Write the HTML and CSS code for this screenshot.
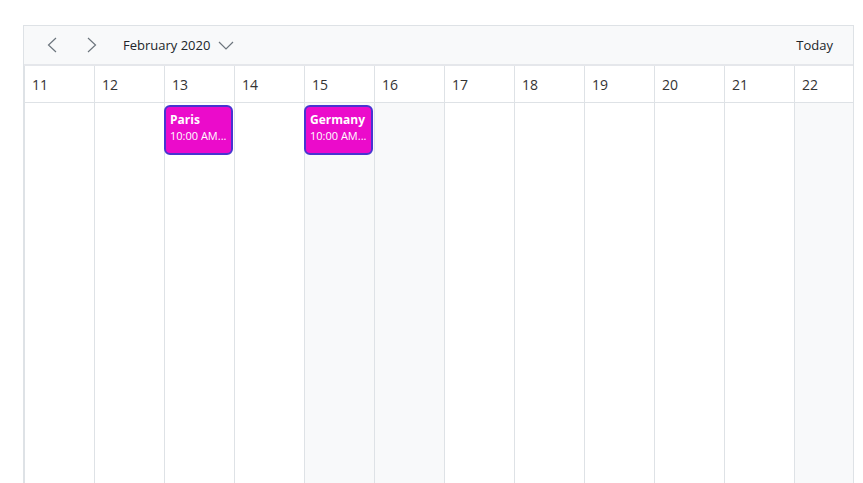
FILE: index.html
```html
<!DOCTYPE html>
<html lang="en">
<head>
    <meta charset="UTF-8">
    <meta name="viewport" content="width=device-width, initial-scale=1.0">
    <title>Timeline Month - Scheduler</title>
    <link rel="stylesheet" href="styles.css">
</head>
<body>
    <div class="scheduler">
        <div class="toolbar">
            <button class="nav-btn" aria-label="Previous">
                <svg width="10" height="16" viewBox="0 0 10 16"><path d="M9 1 L1.5 8 L9 15" fill="none" stroke="#6c757d" stroke-width="1.2"/></svg>
            </button>
            <button class="nav-btn" aria-label="Next">
                <svg width="10" height="16" viewBox="0 0 10 16"><path d="M1 1 L8.5 8 L1 15" fill="none" stroke="#6c757d" stroke-width="1.2"/></svg>
            </button>
            <button class="date-range">
                February 2020
                <svg width="16" height="10" viewBox="0 0 16 10"><path d="M1 1 L8 8 L15 1" fill="none" stroke="#6c757d" stroke-width="1.2"/></svg>
            </button>
            <button class="today-btn">Today</button>
        </div>
        <div class="dates">
            <div class="date">11</div>
            <div class="date">12</div>
            <div class="date">13</div>
            <div class="date">14</div>
            <div class="date">15</div>
            <div class="date">16</div>
            <div class="date">17</div>
            <div class="date">18</div>
            <div class="date">19</div>
            <div class="date">20</div>
            <div class="date">21</div>
            <div class="date">22</div>
        </div>
        <div class="cells">
            <div class="cell"></div>
            <div class="cell"></div>
            <div class="cell">
                <div class="appointment">
                    <div class="subject">Paris</div>
                    <div class="time">10:00 AM...</div>
                </div>
            </div>
            <div class="cell"></div>
            <div class="cell weekend">
                <div class="appointment">
                    <div class="subject">Germany</div>
                    <div class="time">10:00 AM...</div>
                </div>
            </div>
            <div class="cell weekend"></div>
            <div class="cell"></div>
            <div class="cell"></div>
            <div class="cell"></div>
            <div class="cell"></div>
            <div class="cell"></div>
            <div class="cell weekend"></div>
        </div>
    </div>
</body>
</html>
```

FILE: styles.css
```css
* {
    box-sizing: border-box;
    margin: 0;
    padding: 0;
}

body {
    font-family: 'Open Sans', 'Noto Sans', Arial, sans-serif;
    color: #212529;
    background: #fff;
    overflow: hidden;
}

.scheduler {
    margin: 25px 0 0 23px;
    width: 831px;
    height: calc(100vh - 25px);
    border: 1px solid #dee2e6;
    border-bottom: none;
    overflow: hidden;
    display: flex;
    flex-direction: column;
}

.toolbar {
    height: 40px;
    background: #f8f9fa;
    border-bottom: 2px solid #e5e7eb;
    display: flex;
    align-items: center;
    padding: 0 8px 0 8px;
    flex-shrink: 0;
}

button {
    background: none;
    border: none;
    font-family: inherit;
    color: #212529;
    cursor: pointer;
    display: flex;
    align-items: center;
}

.nav-btn {
    width: 40px;
    height: 30px;
    justify-content: center;
}

.date-range {
    margin-left: 11px;
    font-size: 13px;
    gap: 8px;
}

.date-range svg {
    margin-top: 1px;
}

.today-btn {
    margin-left: auto;
    font-size: 13px;
    padding: 0 12px;
}

.dates,
.cells {
    display: flex;
    flex-shrink: 0;
}

.date,
.cell {
    width: 70px;
    flex-shrink: 0;
    border-left: 1px solid #dee2e6;
}

.date {
    height: 37px;
    border-bottom: 1px solid #dee2e6;
    padding: 0 0 0 7px;
    display: flex;
    align-items: center;
    font-size: 14px;
    color: #333;
}

.cells {
    flex: 1;
}

.cell {
    height: 100%;
    padding-top: 2px;
}

.weekend {
    background: #f8f9fa;
}

.appointment {
    margin-left: -1px;
    width: 69px;
    height: 50px;
    background: #eb0bcb;
    border: 2px solid #4735d1;
    border-radius: 6px;
    color: #fff;
    padding: 5px 0 0 4px;
    overflow: hidden;
}

.subject {
    font-size: 12px;
    font-weight: 700;
    line-height: 16px;
    white-space: nowrap;
}

.time {
    font-size: 11px;
    line-height: 15px;
    white-space: nowrap;
}
```
